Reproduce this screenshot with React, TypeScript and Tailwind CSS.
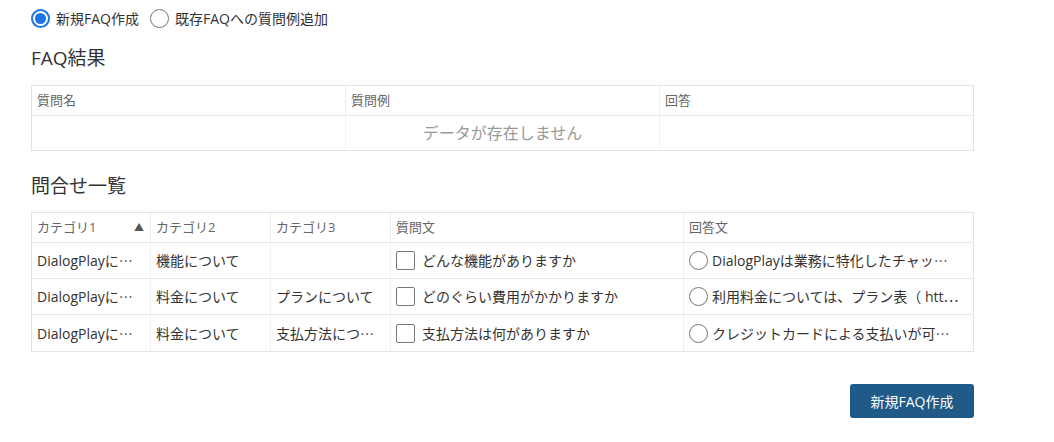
import React from "react";

function Radio({ checked }: { checked?: boolean }) {
  return checked ? (
    <span className="flex h-[19px] w-[19px] shrink-0 items-center justify-center rounded-full border-2 border-[#1a73e8] bg-white">
      <span className="block h-[11px] w-[11px] rounded-full bg-[#1a73e8]" />
    </span>
  ) : (
    <span className="block h-[19px] w-[19px] shrink-0 rounded-full border border-[#767676] bg-white" />
  );
}

function Cut({ t }: { t: string }) {
  return (
    <span className="whitespace-nowrap">
      {t}
      <span className="font-['Noto_Sans_CJK_JP',sans-serif]">…</span>
    </span>
  );
}

const rows: { c1: React.ReactNode; c2: React.ReactNode; c3: React.ReactNode; q: React.ReactNode; a: React.ReactNode }[] = [
  {
    c1: <Cut t="DialogPlayに" />,
    c2: "機能について",
    c3: "",
    q: "どんな機能がありますか",
    a: <Cut t="DialogPlayは業務に特化したチャッ" />,
  },
  {
    c1: <Cut t="DialogPlayに" />,
    c2: "料金について",
    c3: "プランについて",
    q: "どのぐらい費用がかかりますか",
    a: <Cut t="利用料金については、プラン表（ htt" />,
  },
  {
    c1: <Cut t="DialogPlayに" />,
    c2: "料金について",
    c3: <Cut t="支払方法につ" />,
    q: "支払方法は何がありますか",
    a: <Cut t="クレジットカードによる支払いが可" />,
  },
];

export default function App() {
  return (
    <div className="w-[1054px] h-[442px] bg-white pl-[31px] pt-[8px] text-[#333] font-['Open_Sans','Noto_Sans_CJK_JP',sans-serif]">
      <div className="flex h-[20px] items-center text-[14px]">
        <Radio checked />
        <span className="ml-[6px]">新規FAQ作成</span>
        <span className="ml-[11px] flex">
          <Radio />
        </span>
        <span className="ml-[6px]">既存FAQへの質問例追加</span>
      </div>

      <div className="mt-[17px] h-[26px] text-[19px] leading-[26px] text-[#333]">FAQ結果</div>

      <div className="mt-[14px] w-[943px] border border-[#e3e3e3]">
        <div className="grid h-[30px] grid-cols-[314px_314px_313px] border-b border-[#e6e6e6] text-[13px] text-[#666]">
          <div className="flex items-center border-r border-[#eeeeee] pl-[5px]">質問名</div>
          <div className="flex items-center border-r border-[#eeeeee] pl-[5px]">質問例</div>
          <div className="flex items-center pl-[5px]">回答</div>
        </div>
        <div className="grid h-[34px] grid-cols-[314px_314px_313px]">
          <div className="border-r border-[#f2f2f2]" />
          <div className="flex items-center justify-center border-r border-[#f2f2f2] text-[16px] text-[#999]">
            データが存在しません
          </div>
          <div />
        </div>
      </div>

      <div className="mt-[22px] h-[26px] text-[19px] leading-[26px] text-[#333]">問合せ一覧</div>

      <div className="mt-[13px] w-[943px] border border-[#e3e3e3]">
        <div className="grid h-[30px] grid-cols-[119px_120px_120px_293px_289px] border-b border-[#e6e6e6] text-[13px] text-[#666]">
          <div className="flex items-center justify-between border-r border-[#eeeeee] pl-[5px] pr-[6px]">
            <span>カテゴリ1</span>
            <span className="text-[10px] text-[#555]">▲</span>
          </div>
          <div className="flex items-center border-r border-[#eeeeee] pl-[5px]">カテゴリ2</div>
          <div className="flex items-center border-r border-[#eeeeee] pl-[5px]">カテゴリ3</div>
          <div className="flex items-center border-r border-[#eeeeee] pl-[5px]">質問文</div>
          <div className="flex items-center pl-[5px]">回答文</div>
        </div>
        {rows.map((r, i) => (
          <div
            key={i}
            className={
              i < rows.length - 1
                ? "grid h-[36px] grid-cols-[119px_120px_120px_293px_289px] border-b border-[#e6e6e6] text-[14px] text-[#333]"
                : "grid h-[36px] grid-cols-[119px_120px_120px_293px_289px] text-[14px] text-[#333]"
            }
          >
            <div className="flex min-w-0 items-center border-r border-[#f0f0f0] px-[5px]">{r.c1}</div>
            <div className="flex min-w-0 items-center border-r border-[#f0f0f0] px-[5px]">{r.c2}</div>
            <div className="flex min-w-0 items-center border-r border-[#f0f0f0] px-[5px]">{r.c3}</div>
            <div className="flex min-w-0 items-center border-r border-[#f0f0f0] px-[5px]">
              <span className="block h-[19px] w-[19px] shrink-0 rounded-[2px] border border-[#767676] bg-white" />
              <span className="ml-[7px] whitespace-nowrap">{r.q}</span>
            </div>
            <div className="flex min-w-0 items-center pl-[5px] pr-[5px]">
              <span className="block h-[19px] w-[19px] shrink-0 rounded-full border border-[#767676] bg-white" />
              <span className="ml-[4px]">{r.a}</span>
            </div>
          </div>
        ))}
      </div>

      <div className="mt-[32px] flex w-[943px] justify-end">
        <button className="h-[34px] w-[124px] rounded-[3px] bg-[#205a88] text-[14px] text-white">
          新規FAQ作成
        </button>
      </div>
    </div>
  );
}
